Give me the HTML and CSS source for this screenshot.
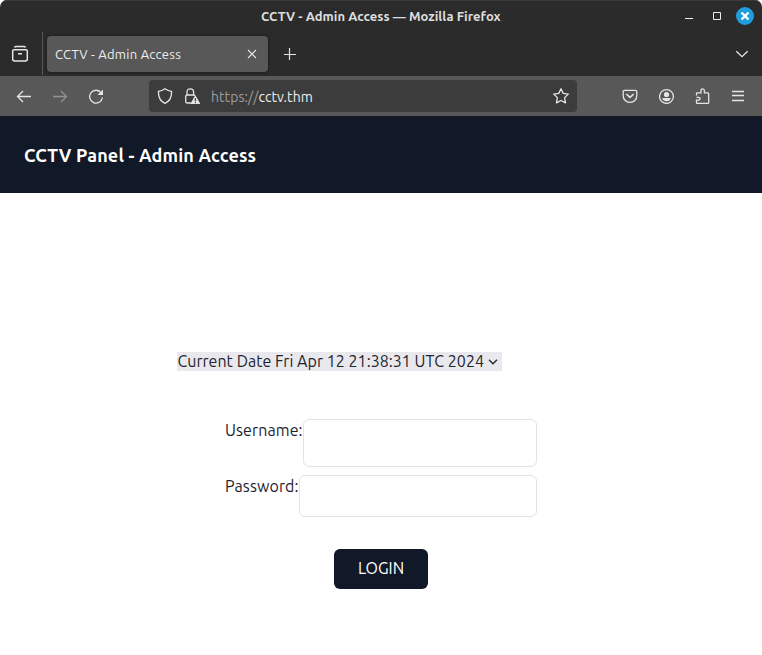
FILE: index.html
```html
<!DOCTYPE html>
<html lang="en">
<head>
<meta charset="utf-8">
<title>CCTV - Admin Access</title>
<link rel="stylesheet" href="styles.css">
</head>
<body>
<div class="window">
  <header class="titlebar">
    <span class="window-title">CCTV - Admin Access — Mozilla Firefox</span>
    <div class="window-controls">
      <svg width="8" height="20" viewBox="0 0 8 20"><path d="M0 12.5h8" stroke="#eee"/></svg>
      <svg width="8" height="20" viewBox="0 0 8 20"><path d="M.5 6.5h7v7h-7z" fill="none" stroke="#eee"/></svg>
      <svg width="18" height="18" viewBox="0 0 18 18"><circle cx="9" cy="9" r="9" fill="#1f9ede"/><path d="M5.500 5.500l7 7m0-7l-7 7" stroke="#fff" stroke-width="2.300"/></svg>
    </div>
  </header>
  <nav class="tabs">
    <div class="archive"><svg class="icon" width="18" height="18" viewBox="0 0 18 18"><path d="M3.500 2.500q.5-1 1.500-1h8q1 0 1.500 1M3 4.700h12q1.300 0 1.300 1.300v8q0 2-2 2H3.700q-2 0-2-2V6Q1.700 4.700 3 4.700zM7 8.800h4" stroke-width="1.500"/></svg></div>
    <div class="tab">
      <span class="tab-title">CCTV - Admin Access</span>
      <svg class="icon close" width="10" height="10" viewBox="0 0 10 10"><path d="M1 1l8 8m0-8L1 9"/></svg>
    </div>
    <svg class="icon plus" width="12" height="12" viewBox="0 0 12 12"><path d="M0 6.500h12M5.500 0v12" stroke-width="1.200"/></svg>
    <svg class="icon all-tabs" width="14" height="8" viewBox="0 0 14 8"><path d="M1.300 1.300L7 6.700l5.700-5.400"/></svg>
  </nav>
  <div class="toolbar">
    <div class="navigation">
      <svg class="icon" width="16" height="16" viewBox="0 0 16 16"><path d="M15 8.500H1.800M7 3L1.500 8.500 7 14"/></svg>
      <svg class="icon disabled" width="16" height="16" viewBox="0 0 16 16"><path d="M1 8.500h13.200M9 3l5.500 5.500L9 14"/></svg>
      <svg class="icon" width="16" height="16" viewBox="0 0 16 16"><path d="M13.300 5A6.400 6.400 0 1 0 14.400 9.500"/><path class="solid" d="M15 1.500V7H9.500z"/></svg>
    </div>
    <div class="address">
      <svg class="icon" width="16" height="16" viewBox="0 0 16 16"><path d="M8 .8Q11 3 14.500 3.300q.6 8.700-6.500 12Q.9 12 1.500 3.300 5 3 8 .8z"/></svg>
      <svg class="icon lock" width="16" height="16" viewBox="0 0 16 16"><path d="M7 15H3.200q-1.500 0-1.500-1.500v-5Q1.700 7 3.200 7h6.300q1.200 0 1.500 1M3 7V4Q3 .8 6.300 .8T9.600 4v3"/><path class="solid" d="M10.800 8q.5-.8 1 0l4.200 7.300q.2.700-.5.700H7.300q-.7 0-.5-.7z"/><path d="M11.400 10.300v2.900m0 1v1.100" stroke="#3c3c3c" stroke-width="1.300"/></svg>
      <span class="url"><span class="scheme">https://</span>cctv.thm</span>
      <svg class="icon star" width="16" height="16" viewBox="0 0 16 16"><path stroke-linejoin="round" d="M8 .8l2.200 4.600 5.100.7-3.700 3.500.9 5.300L8 12.500l-4.500 2.400.9-5.300L.7 6.100l5.100-.7z"/></svg>
    </div>
    <div class="actions">
      <svg class="icon" width="16" height="16" viewBox="0 0 16 16"><path d="M2.500 2.300h11q1.300 0 1.300 1.300V7.800A6.500 6.500 0 0 1 8 14.300 6.500 6.500 0 0 1 1.200 7.800V3.600Q1.200 2.300 2.500 2.300z"/><path d="M4.300 6L8 9.400 11.700 6" stroke-width="1.600"/></svg>
      <svg class="icon account" width="16" height="16" viewBox="0 0 16 16"><circle cx="7.500" cy="8.500" r="6.900"/><circle class="solid" cx="7.500" cy="6.500" r="2.600"/><path class="solid" d="M3.300 10h8.400Q11 13.200 7.500 13.200T3.300 10z"/></svg>
      <svg class="icon extensions" width="16" height="16" viewBox="0 0 16 16"><path d="M1.500 7.500V5.700q0-.8.8-.8h3.700V2.700q0-1.900 1.700-1.900t1.700 1.900v2.200h3.500q.8 0 .8.800v8.900q0 .8-.8.800H2.300q-.8 0-.8-.8v-2.500h2q1.600 0 1.600-1.400T3.500 9.300h-2"/></svg>
      <svg class="icon menu" width="16" height="16" viewBox="0 0 16 16"><path d="M2 3.500h12M2 7.500h12M2 12.500h12"/></svg>
    </div>
  </div>
  <main class="page">
    <header class="page-header"><h1>CCTV Panel - Admin Access</h1></header>
    <form class="login">
      <div class="date"><span>Current Date Fri Apr 12 21:38:31 UTC 2024</span><svg width="10" height="6" viewBox="0 0 10 6"><path d="M1 .8l4 4 4-4" fill="none" stroke="#222a35" stroke-width="1.400"/></svg></div>
      <div class="field username"><label for="user">Username:</label><input id="user" type="text"></div>
      <div class="field password"><label for="pass">Password:</label><input id="pass" type="password"></div>
      <button type="button"><span>LOGIN</span></button>
    </form>
  </main>
</div>
</body>
</html>
```
FILE: styles.css
```css
* { box-sizing: border-box; }
body { margin: 0; background: #fff; font-family: Ubuntu, "Noto Sans", sans-serif; }
svg { display: block; flex: none; }
.window { width: 762px; height: 655px; border-radius: 7px 7px 0 0; overflow: hidden; }
.titlebar { height: 32px; padding: 0 8px 1px 0; display: grid; grid-template-columns: 1fr auto 1fr; align-items: center; background: #2b2b2b; border-top: 1px solid #3a3a3a; }
.window-title { grid-column: 2; margin-left: 8px; width: 240px; color: #dedede; font-size: 13px; font-weight: 700; letter-spacing: .05px; white-space: nowrap; }
.window-controls { display: flex; align-items: center; justify-content: flex-end; }
.window-controls svg + svg { margin-left: 20px; }
.window-controls svg:last-child { margin-left: 15px; }
.icon { fill: none; stroke: #e5e5e5; stroke-width: 1.3; }
.icon .solid { fill: #e5e5e5; stroke: none; }
.tabs { height: 44px; display: flex; align-items: center; background: #2b2b2b; }
.archive { width: 43px; height: 43px; align-self: flex-start; padding: 13px 0 0 11px; border-right: 1px solid #555; }
.tab { width: 221px; height: 36px; margin-left: 4px; padding: 0 11px 0 8px; display: flex; align-items: center; justify-content: space-between; border-radius: 4px; background: #585858; box-shadow: 0 0 3px #171717; color: #eee; font-size: 13px; }
.tab-title { letter-spacing: .25px; }
.close { stroke-width: 1.1; }
.plus { margin-left: 16px; }
.all-tabs { margin: 0 13px 0 auto; }
.toolbar { height: 41px; padding: 0 16px; display: flex; align-items: center; background: #585858; border-bottom: 1px solid #171a20; }
.navigation { width: 133px; display: flex; gap: 20px; }
.disabled { stroke: #929292; }
.address { width: 428px; height: 32px; padding: 0 8px; display: flex; align-items: center; border-radius: 4px; background: #3c3c3c; }
.lock { margin-left: 11px; }
.url { margin: 1px 0 0 11px; color: #eee; font-size: 14px; letter-spacing: .06px; white-space: nowrap; }
.scheme { color: #9d9d9d; }
.star { margin-left: auto; }
.actions { margin-left: auto; display: flex; gap: 20px; }
.account, .extensions { margin: 0 -1px 0 1px; }
.page { color: #1d242e; font-size: 16px; }
.page-header { height: 76px; padding: 0 24px; display: flex; align-items: center; background: #111827; color: #fff; }
h1 { margin: 0; font-size: 18px; line-height: 28px; font-weight: 700; letter-spacing: .16px; white-space: nowrap; }
.login { width: 312px; margin: 159px auto 0; display: flex; flex-direction: column; }
.date { width: 325px; height: 19px; margin: 0 0 48px -48px; padding: 0 4px 0 .5px; display: flex; align-items: center; justify-content: space-between; background: #e9e9ed; line-height: 19px; white-space: nowrap; letter-spacing: .04px; }
.field { display: flex; margin-bottom: 8px; line-height: 22px; }
.field label { flex: none; }
.username label { width: 78px; letter-spacing: .1px; }
.password label { width: 74px; letter-spacing: .1px; }
.field input { min-width: 0; flex: 1; height: 48px; border: 1px solid #e2e2e9; border-radius: 6px; background: #fff; outline: none; }
.password input { height: 42px; }
button { width: 94px; height: 40px; margin: 24px auto 0; padding: 0 0 2px; border: 0; border-radius: 6px; background: #111827; color: #fff; font: 16px Ubuntu, "Noto Sans", sans-serif; }
```
